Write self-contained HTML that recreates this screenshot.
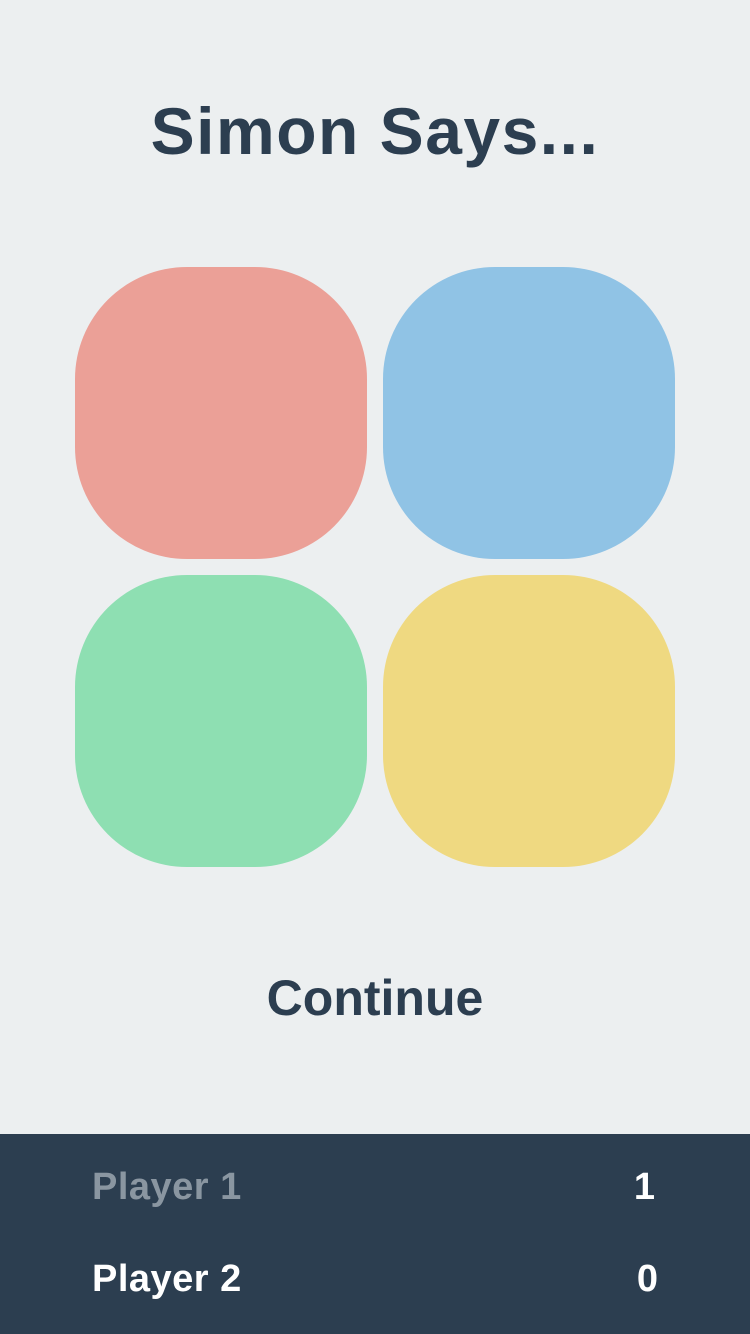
<!DOCTYPE html>
<html><head><meta charset="utf-8"><style>
html,body{margin:0;padding:0;}
body{width:750px;height:1334px;background:#ECEFF0;position:relative;overflow:hidden;font-family:"Liberation Sans",sans-serif;font-weight:bold;color:#2C3E50;}
.t{position:absolute;left:0;width:750px;text-align:center;}
.sq{position:absolute;width:292px;height:292px;border-radius:112px;}
.f{position:absolute;left:0;top:1134px;width:750px;height:200px;background:#2C3E50;}
.r{position:absolute;font-size:38px;}
</style></head><body>
<div class="t" style="top:93px;font-size:66px;letter-spacing:1.5px;">Simon Says...</div>
<div class="sq" style="left:75px;top:267px;background:#EBA097"></div>
<div class="sq" style="left:383px;top:267px;background:#90C3E5"></div>
<div class="sq" style="left:75px;top:575px;background:#8EDFB2"></div>
<div class="sq" style="left:383px;top:575px;background:#EFD981"></div>
<div class="t" style="top:969px;font-size:50px;">Continue</div>
<div class="f">
<div class="r" style="left:92px;top:32px;color:#8A96A1;letter-spacing:0.5px">Player 1</div>
<div class="r" style="right:95px;top:32px;color:#fff">1</div>
<div class="r" style="left:92px;top:124px;color:#fff;letter-spacing:0.5px">Player 2</div>
<div class="r" style="right:92px;top:124px;color:#fff">0</div>
</div>
</body></html>
